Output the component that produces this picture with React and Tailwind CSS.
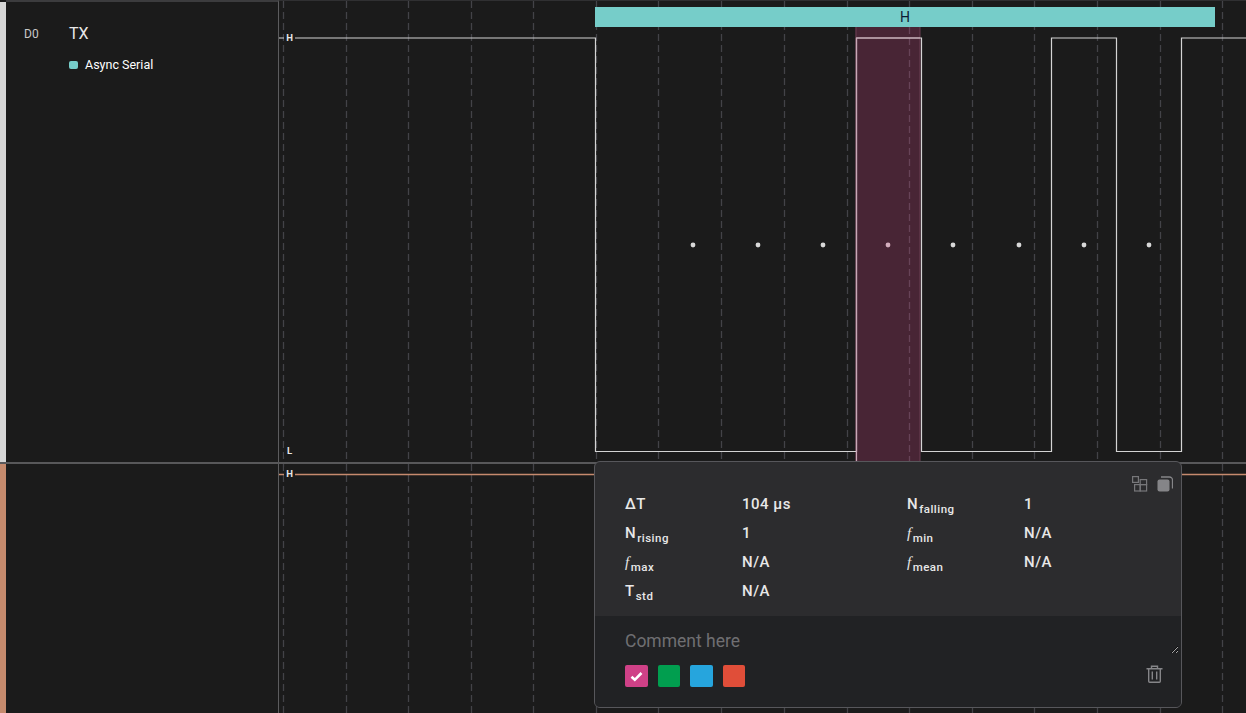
const GRID = [283, 346, 408, 471, 533, 596, 658, 721, 784, 847, 909, 972, 1034, 1097, 1160, 1222];
const CHART_X = 279;
const DOTS = [693, 758, 823, 888, 953, 1019, 1084, 1149];

function Dashes({ height }) {
  return GRID.map((x) => (
    <line key={x} x1={x - CHART_X + 0.5} x2={x - CHART_X + 0.5} y1={0} y2={height} stroke="#434348" strokeWidth="1.3" strokeDasharray="7 4" />
  ));
}

function Level({ children, className }) {
  return (
    <span className={"absolute left-[5px] flex h-[13px] w-[11px] items-center justify-center bg-[#1b1b1b] font-['Roboto',sans-serif] text-[9.5px] leading-none font-bold text-[#e6e6e6] " + className}>
      {children}
    </span>
  );
}

function Metric({ main, italic, sub, value }) {
  return (
    <>
      <div className="whitespace-nowrap">
        {italic ? <i className="font-['Liberation_Serif',serif]">{main}</i> : main}
        {sub && <sub className="ml-px align-[-1px] text-[11.5px] leading-none tracking-[0.5px]">{sub}</sub>}
      </div>
      <div className="whitespace-nowrap">{value}</div>
    </>
  );
}

function Swatch({ className, checked }) {
  return (
    <button className={"flex h-[22px] w-[22.5px] items-center justify-center rounded-[2px] " + className}>
      {checked && (
        <svg width="13" height="11" viewBox="0 0 13 11" fill="none">
          <path d="M1.5 5.8 L4.8 8.8 L11.5 2" stroke="#fff" strokeWidth="2.6" />
        </svg>
      )}
    </button>
  );
}

export default function App() {
  return (
    <div className="relative flex h-screen w-full flex-col overflow-hidden bg-[#1b1b1b] font-['Roboto',sans-serif]">
      {/* Row 1 */}
      <div className="flex h-[464px] shrink-0 border-b-2 border-[#58585a]">
        <div className="mt-[2px] w-[6px] shrink-0 bg-[#d6d6d6]" />
        <div className="flex w-[273px] shrink-0 border-t-2 border-r border-t-[#3c3c3e] border-r-[#5c5c5e] pt-[23px] pl-[18px]">
          <div className="w-[45px] text-[12px] leading-[18px] text-[#c9c9c9]">D0</div>
          <div>
            <div className="text-[16px] leading-[18px] text-[#e8e8e8]">TX</div>
            <div className="mt-[14px] flex items-center gap-[7px]">
              <span className="h-[8px] w-[9px] rounded-[2px] bg-[#76cdc9]" />
              <span className="text-[12.5px] leading-[16px] text-white">Async Serial</span>
            </div>
          </div>
        </div>
        <div className="relative flex-1 border-t border-[#303032]">
          <svg className="absolute inset-0 h-full w-full">
            <Dashes height={462} />
            <rect x={855.5 - CHART_X} y={26} width={64.5} height={436} fill="#482535" />
            <g stroke="#6a3f52" strokeWidth="1">
              <line x1={856 - CHART_X} x2={856 - CHART_X} y1={26} y2={462} />
              <line x1={920 - CHART_X} x2={920 - CHART_X} y1={26} y2={462} />
            </g>
            <line x1={909.5 - CHART_X} x2={909.5 - CHART_X} y1={26} y2={462} stroke="#674358" strokeWidth="1.3" strokeDasharray="7 4" />
            <path
              d={`M0 37 H${595.5 - CHART_X} V450.5 H${856.5 - CHART_X} V37 H${921.5 - CHART_X} V450.5 H${1051.5 - CHART_X} V37 H${1116.5 - CHART_X} V450.5 H${1181.5 - CHART_X} V37 H${1246 - CHART_X}`}
              fill="none"
              stroke="#d4d4d4"
              strokeWidth="1.2"
            />
            <path d={`M${856.5 - CHART_X} 37 H${920 - CHART_X} M${856.5 - CHART_X} 37 V460`} fill="none" stroke="#c9a8b6" strokeWidth="1.2" />
            {DOTS.map((x) => (
              <circle key={x} cx={x - CHART_X} cy={244} r={2.4} fill={x === 888 ? "#d4aebd" : "#d8d8d8"} />
            ))}
          </svg>
          <div className="absolute top-[6px] left-[316px] flex h-[20px] w-[620px] items-center justify-center bg-[#76cdc9] text-[14px] leading-none text-[#0e1a33]">
            H
          </div>
          <Level className="top-[30px]">H</Level>
          <Level className="top-[443px]">L</Level>
        </div>
      </div>

      {/* Row 2 */}
      <div className="flex flex-1">
        <div className="w-[6px] shrink-0 bg-[#c58a6d]" />
        <div className="w-[273px] shrink-0 border-r border-[#5c5c5e]" />
        <div className="relative flex-1">
          <svg className="absolute inset-0 h-full w-full">
            <Dashes height={250} />
            <line x1={0} x2={967} y1={10.5} y2={10.5} stroke="#c68a6e" strokeWidth="1.4" />
          </svg>
          <Level className="top-[3px]">H</Level>
        </div>
      </div>

      {/* Measurement popover */}
      <div className="absolute top-[461px] left-[594px] flex h-[247px] w-[588px] flex-col overflow-hidden rounded-[6px] border border-[#57575b] bg-[#2c2c2e]">
        <div className="relative h-[154px] shrink-0 pt-[28px] pl-[30px]">
          <div className="grid grid-cols-[117px_165px_117px_1fr] auto-rows-[29px] items-center text-[15px] leading-[29px] font-medium tracking-[0.5px] text-[#e8e8e8]">
            <Metric main="ΔT" value="104 μs" />
            <Metric main="N" sub="falling" value="1" />
            <Metric main="N" sub="rising" value="1" />
            <Metric main="f" italic sub="min" value="N/A" />
            <Metric main="f" italic sub="max" value="N/A" />
            <Metric main="f" italic sub="mean" value="N/A" />
            <Metric main="T" sub="std" value="N/A" />
          </div>
          <div className="absolute top-[14px] right-[8px] flex items-center gap-[9px]">
            <svg width="16" height="16" viewBox="0 0 16 16" fill="none" stroke="#77777a" strokeWidth="1.2">
              <rect x="0.6" y="0.6" width="5.8" height="5.8" />
              <rect x="2.6" y="8.6" width="5.6" height="6.4" />
              <rect x="8.2" y="3.6" width="6.4" height="5" />
              <rect x="8.2" y="8.6" width="6.4" height="6.4" />
            </svg>
            <svg width="16" height="16" viewBox="0 0 16 16" fill="none">
              <rect x="0.5" y="3.5" width="12" height="12" rx="2" fill="#858588" />
              <path d="M4 1 H12.5 A3 3 0 0 1 15.5 4 V12.5" stroke="#858588" strokeWidth="1.3" />
            </svg>
          </div>
        </div>
        <div className="relative flex flex-1 flex-col bg-[#212224] pt-[12px] pl-[30px]">
          <textarea
            rows={1}
            placeholder="Comment here"
            className="mr-[2px] block h-[26px] resize-y bg-transparent text-[17.5px] leading-[26px] text-[#e8e8e8] outline-none placeholder:text-[#6f6f72]"
          />
          <div className="mt-[11px] flex gap-[10px]">
            <Swatch className="bg-[#cf4187]" checked />
            <Swatch className="bg-[#019e4f]" />
            <Swatch className="bg-[#26a5dd]" />
            <Swatch className="bg-[#e04e39]" />
          </div>
          <svg className="absolute top-[49px] right-[18px]" width="17" height="18" viewBox="0 0 17 18" fill="none" stroke="#858588" strokeWidth="1.4">
            <path d="M0.5 3.7 H16.5" />
            <path d="M5.5 3.5 V1.2 H11.5 V3.5" />
            <path d="M2.7 3.7 V16.2 A1 1 0 0 0 3.7 17.2 H13.3 A1 1 0 0 0 14.3 16.2 V3.7" />
            <path d="M6.3 6.5 V14.5 M10.7 6.5 V14.5" />
          </svg>
        </div>
      </div>
    </div>
  );
}
